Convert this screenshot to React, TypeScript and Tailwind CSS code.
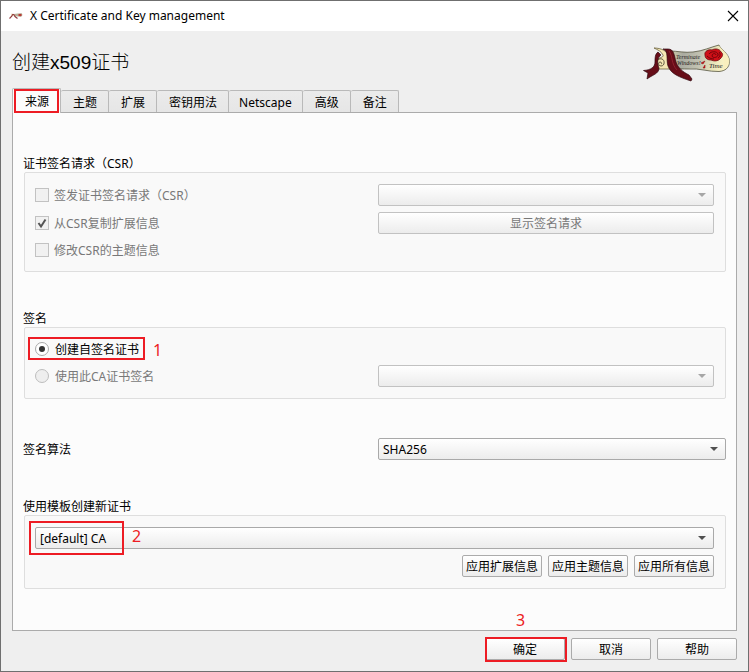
import type { ReactNode } from 'react';
import clsx from 'clsx';

const TABS = ['来源', '主题', '扩展', '密钥用法', 'Netscape', '高级', '备注'];

const controlClass =
  'h-[22px] rounded-xs border bg-linear-to-b from-white to-[#ececec] text-xs leading-none focus-visible:outline-1 focus-visible:outline-[#3c9df0]';

function ScrollLogo() {
  return (
    <svg viewBox="0 0 88 38" className="mt-1.5 h-[38px] w-[88px]" aria-hidden="true">
      <defs>
        <linearGradient id="paper" x1="0" x2="1" y1="0" y2="0.1">
          <stop offset="0" stopColor="#d8d4ac" />
          <stop offset="0.25" stopColor="#a9aaa0" />
          <stop offset="0.55" stopColor="#c3c3b2" />
          <stop offset="0.8" stopColor="#e9e5ba" />
          <stop offset="1" stopColor="#fdf6c8" />
        </linearGradient>
      </defs>
      {/* parchment */}
      <path
        d="M27 7C34 7 42 9 50 8C60 7 68 3 76 1C77 5 86 9 86.500 17C86.500 24 82 27 76 27.500C66 28 56 24 46 25C40 25 34 25 27 24Z"
        fill="url(#paper)"
        stroke="#55543f"
        strokeWidth="0.8"
      />
      <path d="M76 1C77 5 86 9 86.500 17C86 24 80 26 76 26C82 22 82 16 78 12Z" fill="#f7eebb" opacity="0.8" />
      <g fill="#26231c" fontFamily="'Liberation Serif', serif" fontStyle="italic">
        <text x="33" y="15" fontSize="6">
          Terminate
        </text>
        <text x="34" y="21" fontSize="6">
          Windows!
        </text>
        <text x="66" y="24" fontSize="7">
          Time
        </text>
      </g>
      {/* curled end */}
      <path d="M11 4C18 4 25 7 26 13L29 25H15C13 22 13 17 15 15C18 13 21 13 20 11C18 7 15 6 11 4Z" fill="#f6e9b4" stroke="#6d6540" strokeWidth="0.8" />
      <path d="M15 22C12 17 16 14 19 15C22 16 22 22 18 22C15 22 15 18 17 18C19 18 19 20 18 20" fill="none" stroke="#3f3924" strokeWidth="0.8" />
      {/* ribbon */}
      <path d="M15 8C12 10 12 14 12 18C12 23 8 26 0.500 26.500L5 29L4 35C9 31 16 30 16 24C14 19 14 14 18 11Z" fill="#670d18" stroke="#300810" strokeWidth="0.7" />
      <path d="M20 5C26 7 23 16 25 22C28 30 36 33 48 37L49 35L46 31C40 28 35 24 33 18C31 11 31 5 25 5Z" fill="#670d18" stroke="#300810" strokeWidth="0.7" />
      <path d="M26 7C30 12 28 20 34 26" fill="none" stroke="#9a2632" strokeWidth="0.8" />
      {/* rose */}
      <path d="M62 11C61 7 66 5 69 6C72 4 77 5 78 8C81 10 79 13 78 14C75 18 70 17 68 16C64 16 62 14 62 11Z" fill="#cf0f17" stroke="#6b0a0e" strokeWidth="0.8" />
      <path d="M66 10C68 7 74 7 75 10C76 13 70 15 69 12C69 9 73 9 73 11M64 12C66 14 68 15 71 15M76 8C78 10 77 13 75 14" fill="none" stroke="#650509" strokeWidth="0.9" />
      <path d="M58 19L62 17L60 20ZM60 24L62 21V24Z" fill="#cf0f17" stroke="#8b1015" strokeWidth="0.5" />
    </svg>
  );
}

function TitleIcon() {
  return (
    <svg viewBox="0 0 14 8" className="h-2 w-3.5" aria-hidden="true">
      <path d="M5 2L12.500 1L13.500 3L12 5L6 4Z" fill="#b9b29c" />
      <path d="M9.500 2H12.500V4H9.500Z" fill="#bb3a35" />
      <path d="M2 1.500L5 2.500L4 4.500L2.500 4Z" fill="#eadbb0" />
      <path d="M0.500 6.500L2.500 4.500L4 2M4.500 2L6 4.500L8.500 6.500" fill="none" stroke="#943f42" strokeWidth="1.2" />
    </svg>
  );
}

function Annotation({ className, children }: { className: string; children: ReactNode }) {
  return (
    <span className={clsx('pointer-events-none absolute text-base leading-4 text-[#ed1c24]', className)}>{children}</span>
  );
}

function Frame({ className }: { className: string }) {
  return <span aria-hidden="true" className={clsx('pointer-events-none absolute border-2 border-[#ed1c24]', className)} />;
}

function Select({ id, label, value, disabled }: { id: string; label: string; value?: string; disabled?: boolean }) {
  return (
    <div className="relative">
      <select
        id={id}
        aria-label={label}
        disabled={disabled}
        className={clsx(
          controlClass,
          'block w-full appearance-none px-1 pt-0.5 pr-6',
          disabled ? 'border-[#c2c2c2]' : 'border-[#a9a9a9]',
        )}
      >
        {value && <option>{value}</option>}
      </select>
      <svg
        viewBox="0 0 8 4"
        aria-hidden="true"
        className={clsx('pointer-events-none absolute top-[9px] right-2 h-1 w-2', disabled ? 'text-[#a6a6a6]' : 'text-[#505050]')}
      >
        <path d="M0 0H8L4 4Z" fill="currentColor" />
      </svg>
    </div>
  );
}

function Button({ children, className, disabled }: { children: ReactNode; className?: string; disabled?: boolean }) {
  return (
    <button
      type="button"
      disabled={disabled}
      className={clsx(controlClass, 'pt-0.5', disabled ? 'border-[#c2c2c2] text-[#787878]' : 'border-[#ababab]', className)}
    >
      {children}
    </button>
  );
}

function Check({ label, checked }: { label: string; checked?: boolean }) {
  return (
    <label className="flex items-center gap-[5px] text-[#787878]">
      <span className="relative size-3.5">
        <input
          type="checkbox"
          defaultChecked={checked}
          disabled
          className="peer block size-3.5 appearance-none border border-[#c2c2c2] bg-[#f1f1f1]"
        />
        <svg viewBox="0 0 14 14" aria-hidden="true" className="pointer-events-none absolute inset-0 hidden peer-checked:block">
          <path d="M3.500 7L6 10.500L10.500 3.500" fill="none" stroke="#555" strokeWidth="2" />
        </svg>
      </span>
      <span className="pt-0.5">{label}</span>
    </label>
  );
}

function Radio({ label, checked, disabled }: { label: string; checked?: boolean; disabled?: boolean }) {
  return (
    <label className={clsx('flex items-center gap-1.5', disabled && 'text-[#787878]')}>
      <span className="relative size-3.5">
        <input
          type="radio"
          name="signing"
          defaultChecked={checked}
          disabled={disabled}
          className="peer block size-3.5 appearance-none rounded-full border border-[#a9a9a9] bg-white disabled:border-[#bdbdbd] disabled:bg-[#eeeeee]"
        />
        <span className="pointer-events-none absolute inset-1 hidden rounded-full bg-[#333] peer-checked:block" />
      </span>
      <span className="pt-0.5">{label}</span>
    </label>
  );
}

function Group({ title, children }: { title: string; children: ReactNode }) {
  return (
    <fieldset>
      <legend className="h-[18px] leading-5">{title}</legend>
      <div className="ml-px rounded-xs border border-[#dedede] bg-[#f9f9f9] py-[11px] pr-[11px] pl-[10px]">{children}</div>
    </fieldset>
  );
}

export default function App() {
  return (
    <div className="flex min-h-screen flex-col border border-[#6f6f6f] bg-[#efefef] font-['Noto_Sans','Noto_Sans_CJK_SC',sans-serif] text-xs text-black">
      <header className="flex h-[30px] items-center bg-white pr-[9px] pl-2">
        <TitleIcon />
        <span className="ml-[7px]">X Certificate and Key management</span>
        <button type="button" aria-label="关闭" className="ml-auto">
          <svg viewBox="0 0 12 12" className="size-3" aria-hidden="true">
            <path d="M1 1L11 11M11 1L1 11" stroke="#000" strokeWidth="1.1" />
          </svg>
        </button>
      </header>

      <main className="flex flex-1 flex-col px-[11px] pb-[11px]">
        <div className="flex h-[57px] items-center justify-between pr-1.5">
          <h1 className="pt-1.5 font-['Liberation_Sans','Noto_Sans_CJK_SC',sans-serif] text-[19px] font-light">创建x509证书</h1>
          <ScrollLogo />
        </div>

        <div role="tablist" className="flex items-end">
          {TABS.map((tab, i) => (
            <button
              key={tab}
              type="button"
              role="tab"
              aria-selected={i === 0}
              className={clsx(
                'relative rounded-t-xs border-t border-r border-[#b9b9b9] pt-0.5',
                i === 0 ? 'z-10 -mb-px h-[25px] border-l bg-[#fcfcfc]' : 'h-[22px] bg-linear-to-b from-[#ebebeb] to-[#e6e6e6]',
                tab === 'Netscape' ? 'px-[10px]' : 'pr-[11px] pl-3',
              )}
            >
              {tab}
              {i === 0 && <Frame className="top-0 right-px bottom-0 left-px" />}
            </button>
          ))}
        </div>

        <div role="tabpanel" className="flex flex-1 flex-col border border-[#ababab] bg-[#fcfcfc] px-[10px] pt-[41px] pb-10">
          <Group title="证书签名请求（CSR）">
            <div className="grid grid-cols-2 gap-x-[7px] gap-y-1.5">
              <Check label="签发证书签名请求（CSR）" />
              <Select id="request" label="证书签名请求" disabled />
              <Check label="从CSR复制扩展信息" checked />
              <Button disabled>显示签名请求</Button>
              <div className="flex h-5 items-center">
                <Check label="修改CSR的主题信息" />
              </div>
            </div>
          </Group>

          <div className="mt-[37px]">
            <Group title="签名">
              <div className="grid grid-cols-2 gap-x-[7px] gap-y-1.5">
                <div className="relative col-span-2 flex h-5 items-center">
                  <Radio label="创建自签名证书" checked />
                  <Frame className="-top-0.5 -left-[7px] h-[23px] w-[117px]" />
                  <Annotation className="top-[3px] left-[118px]">1</Annotation>
                </div>
                <Radio label="使用此CA证书签名" disabled />
                <Select id="issuer" label="CA证书" disabled />
              </div>
            </Group>
          </div>

          <div className="mt-[39px] grid grid-cols-2 items-center gap-x-[7px]">
            <label htmlFor="algorithm" className="pt-0.5">
              签名算法
            </label>
            <Select id="algorithm" label="签名算法" value="SHA256" />
          </div>

          <div className="mt-[37px]">
            <Group title="使用模板创建新证书">
              <div className="relative">
                <Select id="template" label="模板" value="[default] CA" />
                <Frame className="-top-1.5 -left-1.5 h-[34px] w-[95px]" />
                <Annotation className="top-px left-[97px]">2</Annotation>
              </div>
              <div className="mt-1.5 flex justify-end gap-1.5">
                <Button className="w-20">应用扩展信息</Button>
                <Button className="w-20">应用主题信息</Button>
                <Button className="w-20">应用所有信息</Button>
              </div>
            </Group>
          </div>
        </div>

        <div className="mt-[7px] flex justify-end gap-1.5">
          <div className="relative">
            <Button className="w-20 border-[#3c9df0]">确定</Button>
            <Frame className="-top-px left-0 h-[25px] w-[82px]" />
            <Annotation className="-top-[26px] left-[31px]">3</Annotation>
          </div>
          <Button className="w-20">取消</Button>
          <Button className="w-20">帮助</Button>
        </div>
      </main>
    </div>
  );
}
